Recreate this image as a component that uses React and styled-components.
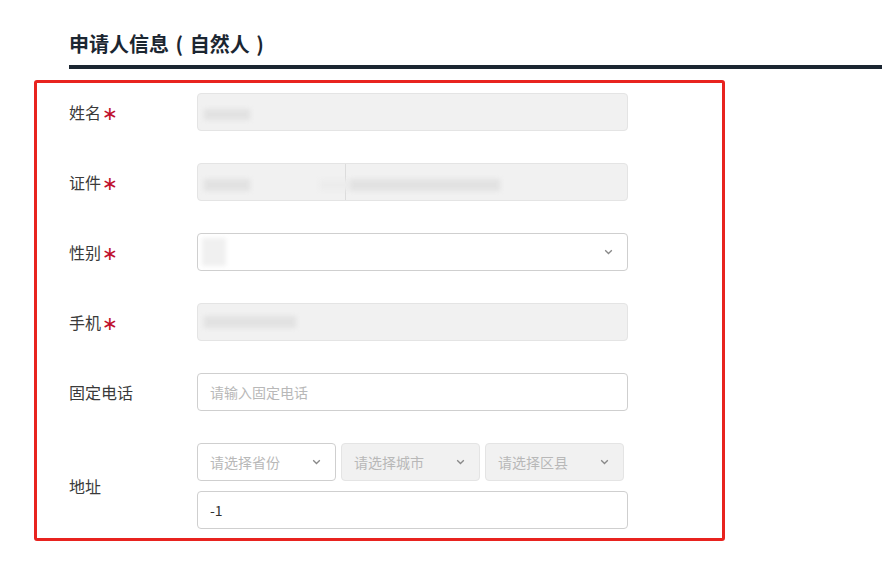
import React from 'react';
import styled, { createGlobalStyle } from 'styled-components';

const GlobalStyle = createGlobalStyle`
  body {
    margin: 0;
    background: #fff;
    font-family: "Microsoft YaHei", "Noto Sans CJK SC", "Liberation Sans", sans-serif;
  }
`;

const Page = styled.div`
  width: 882px;
  height: 564px;
  overflow: hidden;
  padding-top: 29px;
  box-sizing: border-box;
`;

const Heading = styled.div`
  margin-left: 69px;
  border-bottom: 4px solid #1b2631;
  height: 36px;
`;

const Title = styled.h2`
  margin: 0;
  font-size: 20px;
  line-height: 30px;
  font-weight: bold;
  color: #1b2631;
  white-space: pre;
  word-spacing: 2px;
`;

const Highlight = styled.div`
  margin: 11px 0 0 34px;
  width: 691px;
  height: 461px;
  box-sizing: border-box;
  border: 3px solid #e8231f;
  border-radius: 3px;
  padding: 10px 0 0 32px;
  display: flex;
  flex-direction: column;
  gap: 32px;
`;

const Row = styled.div`
  display: flex;
  align-items: center;
`;

const Label = styled.div`
  width: 128px;
  flex: none;
  font-size: 16px;
  color: #3a3a3a;
  display: flex;
  align-items: center;
`;

const Star = styled.span`
  color: #c0102c;
  margin-left: 1px;
  font-family: "DejaVu Sans", sans-serif;
  font-size: 19px;
  line-height: 16px;
  position: relative;
  top: 1px;
`;

const Field = styled.div`
  width: ${p => p.w || 431}px;
  height: 38px;
  box-sizing: border-box;
  border: 1px solid ${p => (p.disabled ? '#e4e4e4' : '#cfcfcf')};
  background: ${p => (p.disabled ? '#f1f1f1' : '#fff')};
  border-radius: 4px;
  display: flex;
  align-items: center;
  padding: 0 12px;
  font-size: 14px;
  color: #333;
  position: relative;
  flex: none;
`;

const Split = styled.div`
  display: flex;
  width: 431px;
  height: 38px;
  box-sizing: border-box;
  border: 1px solid #e4e4e4;
  border-radius: 4px;
  background: #f1f1f1;
`;

const SplitPart = styled.div`
  width: ${p => p.w}px;
  border-left: ${p => (p.first ? 'none' : '1px solid #dcdcdc')};
  display: flex;
  align-items: center;
  padding-left: ${p => p.pad || 6}px;
`;

const Placeholder = styled.span`
  color: #b8b8b8;
`;

const Blur = styled.span`
  display: inline-block;
  width: ${p => p.w}px;
  height: ${p => p.h || 12}px;
  margin-left: ${p => p.ml || 0}px;
  margin-top: ${p => p.mt || 0}px;
  background: ${p => p.c || '#e2e2e2'};
  filter: blur(2px);
  flex: none;
`;

const Caret = styled.svg`
  position: absolute;
  right: 14px;
  top: 50%;
  margin-top: -3px;
  width: 9px;
  height: 6px;
`;

const AddressFields = styled.div`
  display: flex;
  flex-direction: column;
  gap: 10px;
`;

const Selects = styled.div`
  display: flex;
  gap: 5px;
`;

const Chevron = () => (
  <Caret viewBox="0 0 9 6">
    <path d="M1.2 1.2 L4.5 4.5 L7.8 1.2" fill="none" stroke="#888" strokeWidth="1.3" />
  </Caret>
);

const App = () => {
  return (
    <Page>
      <GlobalStyle />
      <Heading>
        <Title>申请人信息 ( 自然人 )</Title>
      </Heading>
      <Highlight>
        <Row>
          <Label>姓名<Star>∗</Star></Label>
          <Field disabled>
            <Blur w={46} h={11} mt={4} ml={-6} />
          </Field>
        </Row>
        <Row>
          <Label>证件<Star>∗</Star></Label>
          <Split>
            <SplitPart first w={146}>
              <Blur w={46} h={12} mt={6} />
            </SplitPart>
            <SplitPart w={284} pad={0}>
              <Blur w={30} h={10} mt={6} ml={-32} c="#ececec" />
              <Blur w={150} h={12} mt={6} />
            </SplitPart>
          </Split>
        </Row>
        <Row>
          <Label>性别<Star>∗</Star></Label>
          <Field>
            <Blur w={24} h={28} ml={-8} c="#f0f0f0" />
            <Chevron />
          </Field>
        </Row>
        <Row>
          <Label>手机<Star>∗</Star></Label>
          <Field disabled>
            <Blur w={92} h={12} ml={-6} />
          </Field>
        </Row>
        <Row>
          <Label>固定电话</Label>
          <Field>
            <Placeholder>请输入固定电话</Placeholder>
          </Field>
        </Row>
        <Row>
          <Label>地址</Label>
          <AddressFields>
            <Selects>
              <Field w={139}>
                <Placeholder>请选择省份</Placeholder>
                <Chevron />
              </Field>
              <Field w={139} disabled>
                <Placeholder>请选择城市</Placeholder>
                <Chevron />
              </Field>
              <Field w={139} disabled>
                <Placeholder>请选择区县</Placeholder>
                <Chevron />
              </Field>
            </Selects>
            <Field>-1</Field>
          </AddressFields>
        </Row>
      </Highlight>
    </Page>
  );
};

export default App;
